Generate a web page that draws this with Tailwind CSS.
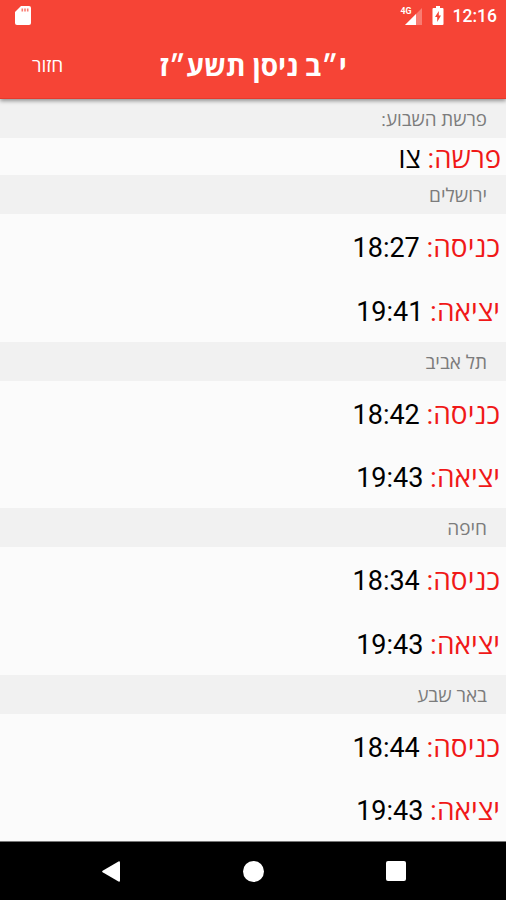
<!DOCTYPE html>
<html lang="he">
<head>
    <meta charset="UTF-8">
    <meta name="viewport" content="width=device-width, initial-scale=1.0">
    <title>זמני שבת</title>
    <script src="https://cdn.jsdelivr.net/npm/@tailwindcss/browser@4"></script>
</head>
<body class="h-[900px] w-[506px] overflow-hidden flex flex-col bg-[#fbfbfb] font-[Roboto,'Open_Sans',sans-serif]">
    <header class="relative z-10 h-[99px] shrink-0 bg-[#f64436] text-white border-b border-[#e63a2c] shadow-[0_2px_4px_rgba(0,0,0,0.4)]">
        <!-- status bar -->
        <div class="h-8 flex items-center justify-between pl-[15px] pr-[9px]">
            <svg class="w-4 h-[19px] -mt-px" viewBox="0 0 16 19">
                <path fill="#fff" d="M6 0h8a2 2 0 0 1 2 2v15a2 2 0 0 1-2 2H2a2 2 0 0 1-2-2V6z"></path>
                <path stroke="#f64436" stroke-opacity=".7" stroke-width="1.6" d="M7.3 2.5v3M10 2.5v3M12.7 2.5v3"></path>
            </svg>
            <div class="flex items-center">
                <svg class="w-[22px] h-[19px]" viewBox="0 0 22 19">
                    <path fill="#fff" fill-opacity=".3" d="M22 1v17H5z"></path>
                    <path fill="#fff" d="M16 7v11H5z"></path>
                    <path fill="#f64436" d="M0 0h12v8.500H0z"></path>
                    <text x="0.500" y="7" font-size="9" font-weight="700" fill="#fff" textLength="11" lengthAdjust="spacingAndGlyphs">4G</text>
                </svg>
                <svg class="w-3 h-[19px] ml-[10px] -mt-px" viewBox="0 0 11 19">
                    <path fill="#fff" d="M3.5 0h4v2H10a1 1 0 0 1 1 1v15a1 1 0 0 1-1 1H1a1 1 0 0 1-1-1V3a1 1 0 0 1 1-1h2.500z"></path>
                    <path fill="#f64436" d="M6.300 5v4.500H8.500L4.700 16v-5H2.500z"></path>
                </svg>
                <span class="ml-[9px] text-[17.500px] leading-8 font-medium">12:16</span>
            </div>
        </div>
        <div class="h-[66px] flex items-center justify-center relative">
            <button class="absolute left-8 top-5 leading-7 text-[19px]">חזור</button>
            <h1 dir="rtl" class="pt-1 text-[28px] font-bold whitespace-nowrap">י״ב ניסן תשע״ז</h1>
        </div>
    </header>

    <main dir="rtl" class="h-[742px] shrink-0 text-[27px] text-black">
        <h2 class="h-[39px] bg-[#f1f1f1] pr-[19px] text-[18.800px] leading-[42px] text-[#7c7c7c]">פרשת השבוע:</h2>
        <p class="h-[37px] pr-[5px] text-[27.500px] leading-[42px]"><span class="text-[#f01818]">פרשה:</span> צו</p>

        <section class="h-[166.6px]">
            <h2 class="h-[39px] bg-[#f1f1f1] pr-[19px] text-[19px] leading-[42px] text-[#7c7c7c]">ירושלים</h2>
            <p class="h-[63.500px] pr-[6px] leading-[68px]"><span class="text-[28px] text-[#f01818]">כניסה:</span> 18:27</p>
            <p class="h-[63.500px] pr-[6px] leading-[68px]"><span class="text-[28px] text-[#f01818]">יציאה:</span> 19:41</p>
        </section>
        <section class="h-[166.6px]">
            <h2 class="h-[39px] bg-[#f1f1f1] pr-[19px] text-[19px] leading-[42px] text-[#7c7c7c]">תל אביב</h2>
            <p class="h-[63.500px] pr-[6px] leading-[68px]"><span class="text-[28px] text-[#f01818]">כניסה:</span> 18:42</p>
            <p class="h-[63.500px] pr-[6px] leading-[68px]"><span class="text-[28px] text-[#f01818]">יציאה:</span> 19:43</p>
        </section>
        <section class="h-[166.6px]">
            <h2 class="h-[39px] bg-[#f1f1f1] pr-[19px] text-[19px] leading-[42px] text-[#7c7c7c]">חיפה</h2>
            <p class="h-[63.500px] pr-[6px] leading-[68px]"><span class="text-[28px] text-[#f01818]">כניסה:</span> 18:34</p>
            <p class="h-[63.500px] pr-[6px] leading-[68px]"><span class="text-[28px] text-[#f01818]">יציאה:</span> 19:43</p>
        </section>
        <section class="h-[166.6px]">
            <h2 class="h-[39px] bg-[#f1f1f1] pr-[19px] text-[19px] leading-[42px] text-[#7c7c7c]">באר שבע</h2>
            <p class="h-[63.500px] pr-[6px] leading-[68px]"><span class="text-[28px] text-[#f01818]">כניסה:</span> 18:44</p>
            <p class="h-[63.500px] pr-[6px] leading-[68px]"><span class="text-[28px] text-[#f01818]">יציאה:</span> 19:43</p>
        </section>
    </main>

    <!-- android navigation -->
    <nav class="flex-1 bg-black border-t border-[#777] flex items-center justify-between pl-[102px] pr-[100px]">
        <svg class="w-[18px] h-[21px]" viewBox="0 0 18 21">
            <path fill="#fff" d="M.6 9.700 16.500.4Q18 0 18 1.500v18q0 1.500-1.500 1.100L.6 11.300q-1-.8 0-1.600z"></path>
        </svg>
        <div class="size-[21px] rounded-full bg-white"></div>
        <div class="size-5 rounded-[2px] bg-white"></div>
    </nav>
</body>
</html>
